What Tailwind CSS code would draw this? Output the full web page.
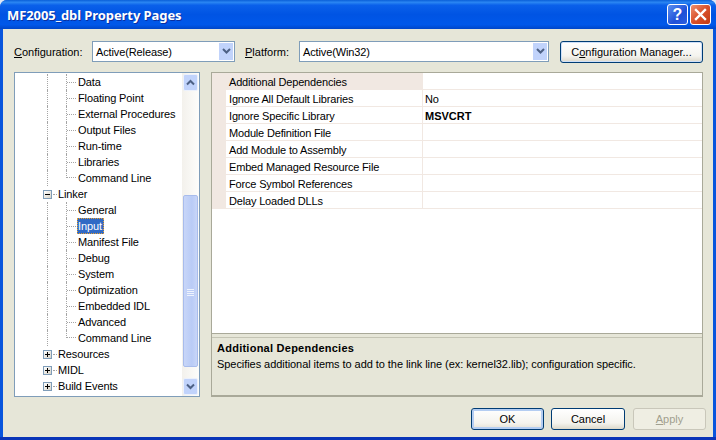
<!DOCTYPE html>
<html><head><meta charset="utf-8"><script src="https://cdn.jsdelivr.net/npm/@tailwindcss/browser@4"></script></head>
<body class="w-[716px] h-[440px] overflow-hidden bg-[#dfe7f5] font-['Liberation_Sans',sans-serif] text-[11px] leading-4 text-black whitespace-nowrap">
<div class="w-[716px] h-[440px] flex flex-col rounded-t-[7px] overflow-hidden bg-[#0855dd]">
  <!-- title bar -->
  <div class="h-[29px] shrink-0 flex items-center justify-between pl-[7px] pr-[5px] bg-[linear-gradient(180deg,#0a5fd8_0%,#2a86f2_8%,#0a60ea_18%,#0054e3_50%,#0058ea_85%,#0046c8_100%)]">
    <span class="text-white font-bold text-[13px] tracking-[-0.08px] font-['Noto_Sans',sans-serif] [text-shadow:1px_1px_0_#0a2fa0]">MF2005_dbl Property Pages</span>
    <div class="flex gap-[2px]">
      <div class="w-[21px] h-[21px] rounded-[3px] border border-white flex items-center justify-center text-white font-bold text-[16px] bg-[linear-gradient(135deg,#5a8ff0,#1f50d8_60%,#2a5fe0)]">?</div>
      <div class="w-[21px] h-[21px] rounded-[3px] border border-white flex items-center justify-center bg-[linear-gradient(135deg,#ee9070,#d9502a_50%,#c23a12)]">
        <svg width="13" height="13" viewBox="0 0 13 13"><path d="M2 2l9 9M11 2l-9 9" stroke="#fff" stroke-width="2.4" stroke-linecap="square" fill="none"/></svg>
      </div>
    </div>
  </div>
  <!-- client -->
  <div class="h-[408px] mx-[3px] shrink-0 bg-[#e6e6d8] pl-[11px] pr-[7px] pt-[12px] flex flex-col">
    <!-- config row -->
    <div class="h-[21px] flex items-center shrink-0">
      <span class="w-[78px] shrink-0"><u>C</u>onfiguration:</span>
      <div class="w-[143px] h-[21px] shrink-0 border border-[#7f9db9] bg-white flex items-center justify-between pl-[3px] pr-[1px]">
        <span class="tracking-[-0.12px]">Active(Release)</span>
        <div class="w-[14px] h-[17px] bg-[#c1d3fb] flex items-center justify-center"><svg width="9" height="7" viewBox="0 0 9 7"><path d="M1 1l3.5 3.5L8 1" stroke="#4d6185" stroke-width="2" fill="none"/></svg></div>
      </div>
      <span class="ml-[10px] w-[54px] shrink-0"><u>P</u>latform:</span>
      <div class="w-[250px] h-[21px] shrink-0 border border-[#7f9db9] bg-white flex items-center justify-between pl-[3px] pr-[1px]">
        <span class="tracking-[-0.12px]">Active(Win32)</span>
        <div class="w-[14px] h-[17px] bg-[#c1d3fb] flex items-center justify-center"><svg width="9" height="7" viewBox="0 0 9 7"><path d="M1 1l3.5 3.5L8 1" stroke="#4d6185" stroke-width="2" fill="none"/></svg></div>
      </div>
      <div class="ml-[11px] w-[143px] h-[22px] shrink-0 rounded-[3px] border border-[#003c74] bg-[linear-gradient(180deg,#fff,#f4f3ee_70%,#dcd8ca)] flex items-center justify-center shadow-[inset_0_0_0_1px_#cfe0f8]"><span>C<u>o</u>nfiguration Manager...</span></div>
    </div>
    <!-- main -->
    <div class="mt-[10px] h-[325px] shrink-0 flex gap-[11px] mr-[3px]">
      <!-- tree -->
      <div class="w-[186px] shrink-0 border border-[#7f9db9] bg-white flex overflow-hidden tracking-[-0.12px]">
        <div class="flex-1 pt-[1px] overflow-hidden">
          <div class="h-4 flex pl-[32px]"><div class="w-[19px] border-l border-dotted border-[#a5a5a5]"></div><div class="w-[12px] flex items-center border-l border-dotted border-[#a5a5a5]"><div class="w-[9px] border-t border-dotted border-[#a5a5a5]"></div></div><span>Data</span></div>
          <div class="h-4 flex pl-[32px]"><div class="w-[19px] border-l border-dotted border-[#a5a5a5]"></div><div class="w-[12px] flex items-center border-l border-dotted border-[#a5a5a5]"><div class="w-[9px] border-t border-dotted border-[#a5a5a5]"></div></div><span>Floating Point</span></div>
          <div class="h-4 flex pl-[32px]"><div class="w-[19px] border-l border-dotted border-[#a5a5a5]"></div><div class="w-[12px] flex items-center border-l border-dotted border-[#a5a5a5]"><div class="w-[9px] border-t border-dotted border-[#a5a5a5]"></div></div><span>External Procedures</span></div>
          <div class="h-4 flex pl-[32px]"><div class="w-[19px] border-l border-dotted border-[#a5a5a5]"></div><div class="w-[12px] flex items-center border-l border-dotted border-[#a5a5a5]"><div class="w-[9px] border-t border-dotted border-[#a5a5a5]"></div></div><span>Output Files</span></div>
          <div class="h-4 flex pl-[32px]"><div class="w-[19px] border-l border-dotted border-[#a5a5a5]"></div><div class="w-[12px] flex items-center border-l border-dotted border-[#a5a5a5]"><div class="w-[9px] border-t border-dotted border-[#a5a5a5]"></div></div><span>Run-time</span></div>
          <div class="h-4 flex pl-[32px]"><div class="w-[19px] border-l border-dotted border-[#a5a5a5]"></div><div class="w-[12px] flex items-center border-l border-dotted border-[#a5a5a5]"><div class="w-[9px] border-t border-dotted border-[#a5a5a5]"></div></div><span>Libraries</span></div>
          <div class="h-4 flex pl-[32px]"><div class="w-[19px] border-l border-dotted border-[#a5a5a5]"></div><div class="w-[12px] h-[8px] flex items-end border-l border-dotted border-[#a5a5a5]"><div class="w-[9px] border-t border-dotted border-[#a5a5a5]"></div></div><span>Command Line</span></div>
          <!-- Linker -->
          <div class="h-4 flex items-center pl-[28px]"><div class="w-[9px] h-[9px] border border-[#7f9db9] bg-[linear-gradient(135deg,#fff,#d8d4c8)] flex items-center justify-center"><div class="w-[5px] h-[1px] bg-black"></div></div><div class="w-[4px] ml-[1px] border-t border-dotted border-[#a5a5a5]"></div><span class="ml-[1px]">Linker</span></div>
          <div class="h-4 flex pl-[32px]"><div class="w-[19px] border-l border-dotted border-[#a5a5a5]"></div><div class="w-[12px] flex items-center border-l border-dotted border-[#a5a5a5]"><div class="w-[9px] border-t border-dotted border-[#a5a5a5]"></div></div><span>General</span></div>
          <div class="h-4 flex pl-[32px]"><div class="w-[19px] border-l border-dotted border-[#a5a5a5]"></div><div class="w-[11px] flex items-center border-l border-dotted border-[#a5a5a5]"><div class="w-[9px] border-t border-dotted border-[#a5a5a5]"></div></div><span class="pr-[1px] bg-[#316ac5] text-white border border-dotted border-[#e8a030] leading-[14px]">Input</span></div>
          <div class="h-4 flex pl-[32px]"><div class="w-[19px] border-l border-dotted border-[#a5a5a5]"></div><div class="w-[12px] flex items-center border-l border-dotted border-[#a5a5a5]"><div class="w-[9px] border-t border-dotted border-[#a5a5a5]"></div></div><span>Manifest File</span></div>
          <div class="h-4 flex pl-[32px]"><div class="w-[19px] border-l border-dotted border-[#a5a5a5]"></div><div class="w-[12px] flex items-center border-l border-dotted border-[#a5a5a5]"><div class="w-[9px] border-t border-dotted border-[#a5a5a5]"></div></div><span>Debug</span></div>
          <div class="h-4 flex pl-[32px]"><div class="w-[19px] border-l border-dotted border-[#a5a5a5]"></div><div class="w-[12px] flex items-center border-l border-dotted border-[#a5a5a5]"><div class="w-[9px] border-t border-dotted border-[#a5a5a5]"></div></div><span>System</span></div>
          <div class="h-4 flex pl-[32px]"><div class="w-[19px] border-l border-dotted border-[#a5a5a5]"></div><div class="w-[12px] flex items-center border-l border-dotted border-[#a5a5a5]"><div class="w-[9px] border-t border-dotted border-[#a5a5a5]"></div></div><span>Optimization</span></div>
          <div class="h-4 flex pl-[32px]"><div class="w-[19px] border-l border-dotted border-[#a5a5a5]"></div><div class="w-[12px] flex items-center border-l border-dotted border-[#a5a5a5]"><div class="w-[9px] border-t border-dotted border-[#a5a5a5]"></div></div><span>Embedded IDL</span></div>
          <div class="h-4 flex pl-[32px]"><div class="w-[19px] border-l border-dotted border-[#a5a5a5]"></div><div class="w-[12px] flex items-center border-l border-dotted border-[#a5a5a5]"><div class="w-[9px] border-t border-dotted border-[#a5a5a5]"></div></div><span>Advanced</span></div>
          <div class="h-4 flex pl-[32px]"><div class="w-[19px] border-l border-dotted border-[#a5a5a5]"></div><div class="w-[12px] h-[8px] flex items-end border-l border-dotted border-[#a5a5a5]"><div class="w-[9px] border-t border-dotted border-[#a5a5a5]"></div></div><span>Command Line</span></div>
          <!-- collapsed -->
          <div class="h-4 flex items-center pl-[28px]"><div class="w-[9px] h-[9px] border border-[#7f9db9] bg-[linear-gradient(135deg,#fff,#d8d4c8)] flex items-center justify-center"><svg width="7" height="7" viewBox="0 0 7 7"><path d="M1 3.5h5M3.5 1v5" stroke="#000"/></svg></div><div class="w-[4px] ml-[1px] border-t border-dotted border-[#a5a5a5]"></div><span class="ml-[1px]">Resources</span></div>
          <div class="h-4 flex items-center pl-[28px]"><div class="w-[9px] h-[9px] border border-[#7f9db9] bg-[linear-gradient(135deg,#fff,#d8d4c8)] flex items-center justify-center"><svg width="7" height="7" viewBox="0 0 7 7"><path d="M1 3.5h5M3.5 1v5" stroke="#000"/></svg></div><div class="w-[4px] ml-[1px] border-t border-dotted border-[#a5a5a5]"></div><span class="ml-[1px]">MIDL</span></div>
          <div class="h-4 flex items-center pl-[28px]"><div class="w-[9px] h-[9px] border border-[#7f9db9] bg-[linear-gradient(135deg,#fff,#d8d4c8)] flex items-center justify-center"><svg width="7" height="7" viewBox="0 0 7 7"><path d="M1 3.5h5M3.5 1v5" stroke="#000"/></svg></div><div class="w-[4px] ml-[1px] border-t border-dotted border-[#a5a5a5]"></div><span class="ml-[1px]">Build Events</span></div>
        </div>
        <!-- scrollbar -->
        <div class="w-[17px] shrink-0 flex flex-col bg-[linear-gradient(90deg,#f3f1ec,#fdfdfb)] pl-[1px] pr-[1px] py-[1px]">
          <div class="h-[17px] shrink-0 rounded-[2px] border border-[#ecf1fc] bg-[#c1d3fb] flex items-center justify-center"><svg width="9" height="7" viewBox="0 0 9 7"><path d="M1 5.5L4.5 2 8 5.5" stroke="#4d6185" stroke-width="2" fill="none"/></svg></div>
          <div class="h-[104px] shrink-0"></div>
          <div class="h-[172px] shrink-0 rounded-[2px] border border-[#a8bcec] bg-[linear-gradient(90deg,#c8d6f8,#b9cbf6_60%,#c8d6f8)] flex items-center justify-center pt-[24px]">
            <svg width="7" height="8" viewBox="0 0 7 8"><path d="M0 .5h7M0 2.5h7M0 4.5h7M0 6.5h7" stroke="#eef3fd"/></svg>
          </div>
          <div class="flex-1"></div>
          <div class="h-[17px] shrink-0 rounded-[2px] border border-[#ecf1fc] bg-[#c1d3fb] flex items-center justify-center"><svg width="9" height="7" viewBox="0 0 9 7"><path d="M1 1.5L4.5 5 8 1.5" stroke="#4d6185" stroke-width="2" fill="none"/></svg></div>
        </div>
      </div>
      <!-- property panel -->
      <div class="flex-1 flex flex-col border-t border-l border-r border-b-2 border-[#a9a999]">
        <div class="h-[261px] shrink-0 bg-white border-b border-[#a9a999] tracking-[-0.17px]">
          <div class="flex h-[17px] leading-[18px] bg-[#f1e8e2] border-b border-[#f1e8e2]"><div class="w-[211px] pl-[17px]">Additional Dependencies</div><div class="flex-1 bg-white"></div></div>
          <div class="flex h-[17px] leading-[18px] pl-[14px] bg-[#f1e8e2]"><div class="w-[197px] shrink-0 pl-[3px] bg-white border-b border-r border-[#f1e8e2]">Ignore All Default Libraries</div><div class="flex-1 pl-[2px] bg-white border-b border-[#f1e8e2]">No</div></div>
          <div class="flex h-[17px] leading-[18px] pl-[14px] bg-[#f1e8e2]"><div class="w-[197px] shrink-0 pl-[3px] bg-white border-b border-r border-[#f1e8e2]">Ignore Specific Library</div><div class="flex-1 pl-[2px] bg-white border-b border-[#f1e8e2] font-bold tracking-normal">MSVCRT</div></div>
          <div class="flex h-[17px] leading-[18px] pl-[14px] bg-[#f1e8e2]"><div class="w-[197px] shrink-0 pl-[3px] bg-white border-b border-r border-[#f1e8e2]">Module Definition File</div><div class="flex-1 bg-white border-b border-[#f1e8e2]"></div></div>
          <div class="flex h-[17px] leading-[18px] pl-[14px] bg-[#f1e8e2]"><div class="w-[197px] shrink-0 pl-[3px] bg-white border-b border-r border-[#f1e8e2]">Add Module to Assembly</div><div class="flex-1 bg-white border-b border-[#f1e8e2]"></div></div>
          <div class="flex h-[17px] leading-[18px] pl-[14px] bg-[#f1e8e2]"><div class="w-[197px] shrink-0 pl-[3px] bg-white border-b border-r border-[#f1e8e2]">Embed Managed Resource File</div><div class="flex-1 bg-white border-b border-[#f1e8e2]"></div></div>
          <div class="flex h-[17px] leading-[18px] pl-[14px] bg-[#f1e8e2]"><div class="w-[197px] shrink-0 pl-[3px] bg-white border-b border-r border-[#f1e8e2]">Force Symbol References</div><div class="flex-1 bg-white border-b border-[#f1e8e2]"></div></div>
          <div class="flex h-[17px] leading-[18px] pl-[14px] bg-[#f1e8e2]"><div class="w-[197px] shrink-0 pl-[3px] bg-white border-b border-r border-[#f1e8e2]">Delay Loaded DLLs</div><div class="flex-1 bg-white border-b border-[#f1e8e2]"></div></div>
        </div>
        <div class="mt-[3px] flex-1 border-t border-[#c4c4b4] pl-[5px] pt-[2px]">
          <div class="font-bold tracking-[0.25px]">Additional Dependencies</div>
          <div class="tracking-[-0.06px]">Specifies additional items to add to the link line (ex: kernel32.lib); configuration specific.</div>
        </div>
      </div>
    </div>
    <!-- buttons -->
    <div class="mt-[11px] flex justify-end">
      <div class="w-[73px] h-[22px] rounded-[3px] border border-[#003c74] bg-[linear-gradient(180deg,#fff,#f4f3ee_70%,#e4e0d4)] flex items-center justify-center shadow-[inset_0_0_0_2px_#b4cdf2]">OK</div>
      <div class="ml-[7px] w-[74px] h-[22px] rounded-[3px] border border-[#003c74] bg-[linear-gradient(180deg,#fff,#f4f3ee_70%,#dcd8ca)] flex items-center justify-center">Cancel</div>
      <div class="ml-[8px] w-[73px] h-[22px] rounded-[3px] border border-[#c9c7ba] bg-[#efeee3] text-[#a19f8e] flex items-center justify-center"><span><u>A</u>pply</span></div>
    </div>
  </div>
  <div class="flex-1 bg-[#0a35b8]"></div>
</div>
</body></html>
